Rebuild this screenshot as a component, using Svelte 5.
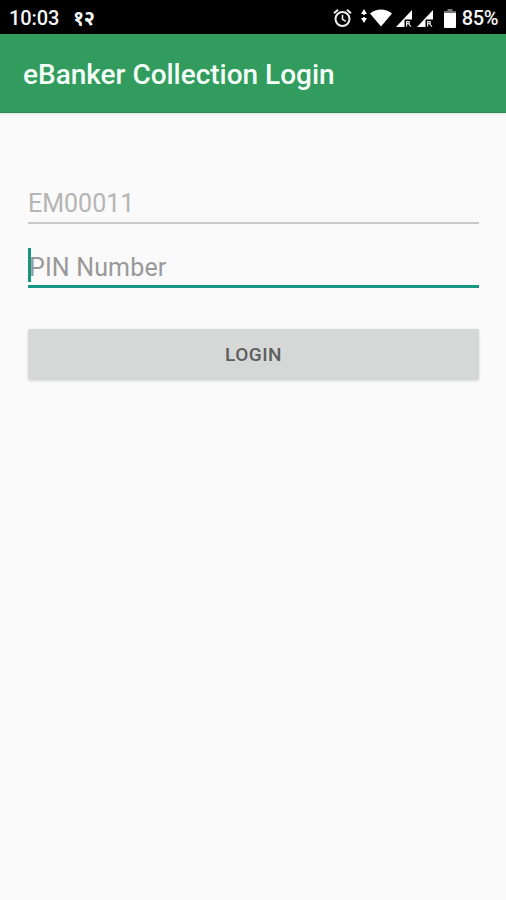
<script>
  let pin = $state('');
  const user = 'EM00011';
  const clock = '10:03';
  const battery = 85;
</script>

{#snippet signal()}
  <svg class="signal" width="16" height="17" viewBox="0 0 16 17">
    <path d="M0 17 16 0V9.5H8.5V17Z" fill="#fff" />
    <path d="M10.6 11V16.5M10.6 11.6H13.2V13.6H10.6M12.4 13.6 15 16.6" fill="none" stroke="#ddd" stroke-width="1.2" />
  </svg>
{/snippet}

<div class="screen">
  <div class="status">
    <span class="clock">{clock}</span>
    <span class="notice">१२</span>
    <div class="icons">
      <svg class="alarm" width="19" height="20" viewBox="0 0 19 20" fill="none" stroke="#eee">
        <circle cx="9.5" cy="11" r="7" stroke-width="2" />
        <path d="M1 5.2 5 1.8M18 5.2 14 1.8" stroke-width="2" />
        <path d="M9.5 6.8V11.4L12.8 13.4" stroke-width="1.6" />
      </svg>
      <svg class="wifi" width="31" height="18" viewBox="0 0 31 18" fill="#fff">
        <path d="M3 0 6 5H0ZM0 9H6L3 14ZM2.2 4H3.8V6H2.2ZM2.2 8H3.8V10H2.2Z" />
        <path d="M9 4.5C15.5-.7 24.5-.7 31 4.5L20 17.5Z" />
      </svg>
      {@render signal()}
      {@render signal()}
      <svg class="battery" width="12" height="19" viewBox="0 0 12 19">
        <path d="M3.5 0H8.5V2H12V5H0V2H3.5Z" fill="#777" />
        <path d="M0 4H12V18Q12 19 11 19H1Q0 19 0 18Z" fill="#fff" />
      </svg>
      <span class="percent">{battery}%</span>
    </div>
  </div>

  <header class="appbar">
    <h1>eBanker Collection Login</h1>
  </header>

  <form class="login" onsubmit={(e) => e.preventDefault()}>
    <div class="field">{user}</div>
    <label class="field active">
      <span class="caret"></span>
      <input type="password" placeholder="PIN Number" bind:value={pin} />
    </label>
    <button class="btn" type="submit">LOGIN</button>
  </form>
</div>

<style>
  :global(body) { background: #fafafa; }
  .screen { height: 900px; background: #fafafa; font-family: Roboto, 'Noto Sans', sans-serif; overflow: hidden; }
  .status { display: flex; align-items: center; box-sizing: border-box; height: 34px; padding: 2px 8px 0 9px;
    background: #000; color: #f5f5f5; font-size: 20px; font-weight: 500; line-height: 32px; }
  .clock { width: 64px; letter-spacing: -0.1px; }
  .notice { font-family: 'Noto Sans', sans-serif; font-size: 20px; font-weight: 700; letter-spacing: -0.5px; }
  .icons { display: flex; align-items: center; margin-left: auto; }
  .alarm { margin-right: 9px; }
  .wifi { margin-right: 4px; }
  .signal { margin-right: 5px; }
  .battery { margin: 0 6px 0 6px; }
  .percent { letter-spacing: -0.4px; }

  .appbar { display: flex; align-items: center; box-sizing: border-box; height: 79px; padding: 4px 23px 0;
    background: #319c5d; border-bottom: 1px solid #2b8c53; box-shadow: 0 1px 2px #0000001a; }
  h1 { margin: 0; color: #f4fff8; font-size: 28px; font-weight: 500; line-height: 36px; letter-spacing: -0.02px; white-space: nowrap; }

  .login { display: flex; flex-direction: column; padding: 72px 27px 0 28px; }
  .field { position: relative; box-sizing: border-box; height: 39px; border-bottom: 2px solid #c9c9c9;
    color: #b5b5b5; font-size: 25px; line-height: 37px; }
  .field.active { height: 44px; margin-top: 20px; border-bottom: 3px solid #159582; }
  .caret { position: absolute; left: 0; top: 4px; width: 3px; height: 34px; background: #159582; }
  input { display: block; box-sizing: border-box; width: 100%; height: 41px; padding: 5px 0 0 1px; border: 0; outline: 0;
    background: transparent; color: #333; font: 25px Roboto, sans-serif; letter-spacing: 0.15px; }
  input::placeholder { color: #999; opacity: 1; }
  .btn { height: 51px; margin-top: 41px; padding: 0; border: 0; border-radius: 2px; background: #d6d8d7;
    box-shadow: 0 1px 3px #00000026; color: #5c5e5d; font: 500 19px/51px Roboto, sans-serif; letter-spacing: 0.5px; }
</style>
